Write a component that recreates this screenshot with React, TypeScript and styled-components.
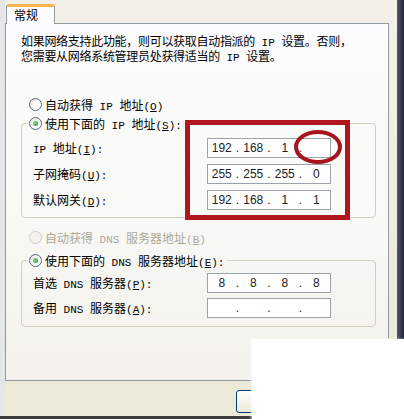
import React from "react";
import styled, { createGlobalStyle } from "styled-components";

const Global = createGlobalStyle`
  html, body { margin: 0; padding: 0; background: #ece9d8; }
  body { font-family: "Noto Sans CJK SC", "Noto Sans", sans-serif; }
  * { box-sizing: border-box; }
`;

const Screen = styled.div`
  position: relative;
  width: 404px;
  height: 419px;
  overflow: hidden;
  display: flex;
  flex-direction: column;
  background: #ece9d8;
  font-family: "Noto Sans CJK SC", sans-serif;
  font-size: 12px;
  color: #000;
`;

const Body = styled.div`
  display: flex;
  height: 416px;
`;

const LeftEdge = styled.div`
  width: 5px;
  background: #e4e6e8;
`;

const RightFrame = styled.div`
  width: 7px;
  background: linear-gradient(to right, #53566a, #22243a);
`;

const BottomLine = styled.div`
  height: 3px;
  background: #3c3c3c;
`;

const Main = styled.div`
  flex: 1;
  display: flex;
  flex-direction: column;
  background: linear-gradient(to bottom, #f2f0e8, #ece9d8);
`;

const TabStrip = styled.div`
  height: 24px;
  padding: 4px 0 0 1px;
  display: flex;
  margin-bottom: -1px;
`;

const Tab = styled.div`
  position: relative;
  z-index: 1;
  width: 49px;
  height: 20px;
  background: #fcfcfe;
  border: 1px solid #919b9c;
  border-bottom: none;
  border-top: 3px solid #f5b54a;
  border-radius: 3px 3px 0 0;
  padding-left: 7px;
  font-size: 12px;
  line-height: 15px;
`;

const Panel = styled.div`
  height: 358px;
  margin-right: 8px;
  border: 1px solid #919b9c;
  background: linear-gradient(to bottom, #fcfcfe 0%, #f9f9f6 50%, #f3f2ec 100%);
  padding: 10px 12px 0 15px;
  display: flex;
  flex-direction: column;
`;

const Intro = styled.p`
  margin: 0;
  height: 26px;
  flex: none;
  line-height: 13px;
  font-size: 12px;
  letter-spacing: -0.3px;
`;

const L = styled.span`
  font-family: "Liberation Mono", monospace;
  font-size: 11px;
  line-height: 1;
  letter-spacing: 0;
`;

const RadioRow = styled.div<{ $top: number; $disabled?: boolean }>`
  display: flex;
  align-items: center;
  gap: 3px;
  height: 16px;
  flex: none;
  margin-top: ${(p) => p.$top}px;
  padding-left: 8px;
  color: ${(p) => (p.$disabled ? "#aca899" : "#000")};
`;

const Radio = styled.span<{ $checked?: boolean; $disabled?: boolean }>`
  position: relative;
  width: 13px;
  height: 13px;
  border-radius: 50%;
  border: 1px solid ${(p) => (p.$disabled ? "#cfcdc2" : "#5b6b7c")};
  background: ${(p) =>
    p.$disabled
      ? "#f4f3ee"
      : "radial-gradient(circle at 70% 70%, #ffffff 30%, #dedcd3 100%)"};
  flex: none;
  &::after {
    content: "";
    display: ${(p) => (p.$checked ? "block" : "none")};
    position: absolute;
    left: 3px;
    top: 3px;
    width: 5px;
    height: 5px;
    border-radius: 50%;
    background: radial-gradient(circle at 40% 40%, #8fdb8f, #1f8f1f);
  }
`;

const Group = styled.fieldset<{ $top: number; $bottom: number }>`
  margin: ${(p) => p.$top}px 0 0 0;
  padding: 0 0 ${(p) => p.$bottom}px 0;
  border: 1px solid #d0d0bf;
  border-radius: 4px;
  min-inline-size: 0;
  flex: none;
`;

const Legend = styled.legend`
  margin-left: 6px;
  padding: 0 3px 0 1px;
  height: 16px;
  display: flex;
  align-items: center;
  gap: 3px;
`;

const Rows = styled.div<{ $top: number; $gap: number }>`
  display: grid;
  grid-template-columns: 174px 124px;
  grid-auto-rows: 20px;
  row-gap: ${(p) => p.$gap}px;
  padding: ${(p) => p.$top}px 11px 0 11px;
  align-items: center;
`;

const Label = styled.span`
  line-height: 16px;
`;

const IpBox = styled.div<{ $h: number }>`
  height: ${(p) => p.$h}px;
  border: 1px solid #9aa3ab;
  background: #fff;
  display: flex;
  align-items: center;
  font-family: "Liberation Sans", sans-serif;
  font-size: 12px;
  color: #222;
`;

const Seg = styled.span`
  flex: 1;
  text-align: center;
`;

const Dot = styled.span`
  width: 4px;
  text-align: center;
`;

const Footer = styled.div`
  flex: 1;
  padding: 9px 0 0 231px;
`;

const Button = styled.div`
  width: 75px;
  height: 23px;
  border: 1px solid #003c74;
  border-radius: 3px;
  background: linear-gradient(to bottom, #ffffff, #ece9d8);
`;

const Cover = styled.div`
  position: absolute;
  left: 252px;
  top: 339px;
  right: 0;
  bottom: 0;
  background: #fff;
  box-shadow: -1px 0 2px rgba(255, 255, 255, 0.8);
`;

const Marks = styled.svg`
  position: absolute;
  left: 0;
  top: 0;
  pointer-events: none;
`;

function Ip({ parts, h }: { parts: string[]; h: number }) {
  return (
    <IpBox $h={h}>
      {parts.map((p, i) => (
        <React.Fragment key={i}>
          {i > 0 && <Dot>.</Dot>}
          <Seg>{p}</Seg>
        </React.Fragment>
      ))}
    </IpBox>
  );
}

export default function App() {
  return (
    <Screen>
      <Global />
      <Body>
        <LeftEdge />
        <Main>
          <TabStrip>
            <Tab>常规</Tab>
          </TabStrip>
          <Panel>
            <Intro>
              如果网络支持此功能，则可以获取自动指派的<L> IP </L>设置。否则，
              <br />
              您需要从网络系统管理员处获得适当的<L> IP </L>设置。
            </Intro>

            <RadioRow $top={36}>
              <Radio />
              <span>
                自动获得<L> IP </L>地址<L>(<u>O</u>)</L>
              </span>
            </RadioRow>

            <Group $top={3} $bottom={7}>
              <Legend>
                <Radio $checked />
                <span>
                  使用下面的<L> IP </L>地址<L>(<u>S</u>):</L>
                </span>
              </Legend>
              <Rows $top={7} $gap={6}>
                <Label>
                  <L>IP </L>地址<L>(<u>I</u>):</L>
                </Label>
                <Ip h={20} parts={["192", "168", "1", ""]} />
                <Label>
                  子网掩码<L>(<u>U</u>):</L>
                </Label>
                <Ip h={20} parts={["255", "255", "255", "0"]} />
                <Label>
                  默认网关<L>(<u>D</u>):</L>
                </Label>
                <Ip h={20} parts={["192", "168", "1", "1"]} />
              </Rows>
            </Group>

            <RadioRow $top={11} $disabled>
              <Radio $disabled />
              <span>
                自动获得<L> DNS </L>服务器地址<L>(<u>B</u>)</L>
              </span>
            </RadioRow>

            <Group $top={7} $bottom={8}>
              <Legend>
                <Radio $checked />
                <span>
                  使用下面的<L> DNS </L>服务器地址<L>(<u>E</u>):</L>
                </span>
              </Legend>
              <Rows $top={5} $gap={5}>
                <Label>
                  首选<L> DNS </L>服务器<L>(<u>P</u>):</L>
                </Label>
                <Ip h={20} parts={["8", "8", "8", "8"]} />
                <Label>
                  备用<L> DNS </L>服务器<L>(<u>A</u>):</L>
                </Label>
                <Ip h={20} parts={["", "", "", ""]} />
              </Rows>
            </Group>
          </Panel>
          <Footer>
            <Button />
          </Footer>
        </Main>
        <RightFrame />
      </Body>
      <BottomLine />

      <Marks width="404" height="419" viewBox="0 0 404 419">
        <rect x="187.5" y="122.5" width="160" height="95" fill="none" stroke="#b0161d" strokeWidth="5" />
        <ellipse cx="318" cy="147" rx="22" ry="15" fill="none" stroke="#a8141b" strokeWidth="4" />
      </Marks>
      <Cover />
    </Screen>
  );
}
